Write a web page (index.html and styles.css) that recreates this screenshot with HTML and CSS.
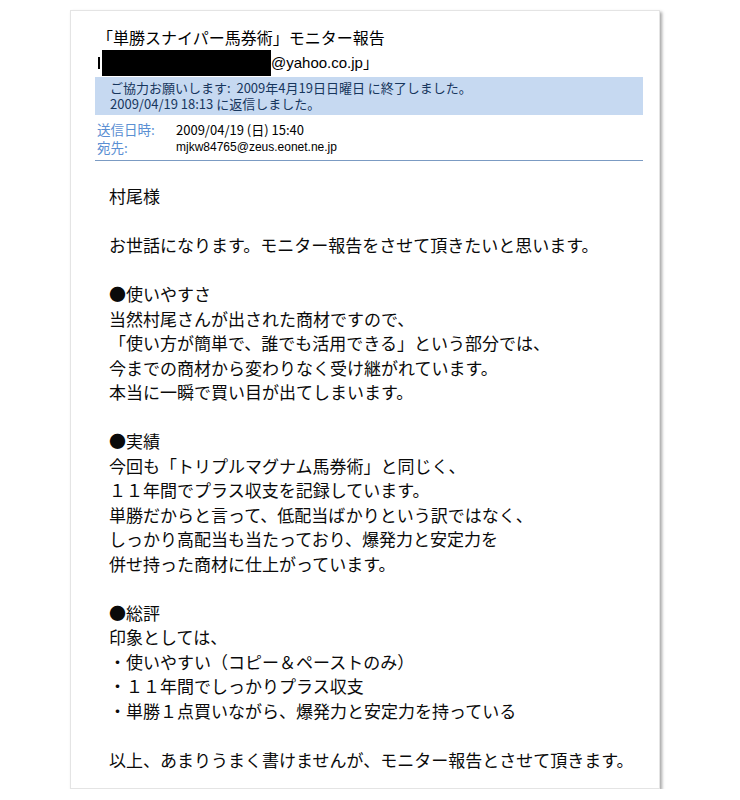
FILE: index.html
```html
<!DOCTYPE html>
<html lang="ja">
<head>
<meta charset="utf-8">
<title>モニター報告</title>
<link rel="stylesheet" href="styles.css">
</head>
<body>
<div class="card">
  <div class="head">
    <div class="subject">「単勝スナイパー馬券術」モニター報告</div>
    <div class="from"><span class="tick"></span><span class="redact"></span><span class="addr">@yahoo.co.jp」</span></div>
    <div class="notice">
      <div>ご協力お願いします:&nbsp; 2009年4月19日日曜日 に終了しました。</div>
      <div>2009/04/19 18:13 に返信しました。</div>
    </div>
    <div class="meta">
      <div class="row"><span class="label">送信日時:</span><span class="value">2009/04/19 (日) 15:40</span></div>
      <div class="row"><span class="label">宛先:</span><span class="value small">mjkw84765@zeus.eonet.ne.jp</span></div>
    </div>
  </div>
  <div class="body">
    <p>村尾様</p>
    <p>お世話になります。モニター報告をさせて頂きたいと思います。</p>
    <p>●使いやすさ<br>当然村尾さんが出された商材ですので、<br>「使い方が簡単で、誰でも活用できる」という部分では、<br>今までの商材から変わりなく受け継がれています。<br>本当に一瞬で買い目が出てしまいます。</p>
    <p>●実績<br>今回も「トリプルマグナム馬券術」と同じく、<br>１１年間でプラス収支を記録しています。<br>単勝だからと言って、低配当ばかりという訳ではなく、<br>しっかり高配当も当たっており、爆発力と安定力を<br>併せ持った商材に仕上がっています。</p>
    <p>●総評<br>印象としては、<br>・使いやすい（コピー＆ペーストのみ）<br>・１１年間でしっかりプラス収支<br>・単勝１点買いながら、爆発力と安定力を持っている</p>
    <p>以上、あまりうまく書けませんが、モニター報告とさせて頂きます。</p>
  </div>
</div>
</body>
</html>
```
FILE: styles.css
```css
html, body {
  margin: 0;
  padding: 0;
  background: #ffffff;
}
body {
  font-family: "Noto Sans CJK JP", "Liberation Sans", sans-serif;
  color: #000;
}
.card {
  box-sizing: border-box;
  margin: 10px 0 0 70px;
  width: 590px;
  height: 779px;
  background: #fff;
  border: 1px solid #e4e4e4;
  box-shadow: 2px 2px 3px rgba(0, 0, 0, 0.35);
}
.head {
  padding: 16px 16px 0 24px;
}
.subject {
  font-size: 16px;
  line-height: 20px;
  padding-left: 2px;
  white-space: nowrap;
}
.from {
  display: flex;
  align-items: center;
  height: 26px;
  margin-top: 3px;
  padding-left: 3px;
}
.tick {
  width: 2px;
  height: 12px;
  background: #000;
  margin-right: 2px;
}
.redact {
  width: 169px;
  height: 26px;
  background: #000;
}
.addr {
  font-family: "Liberation Sans", "Noto Sans CJK JP", sans-serif;
  font-size: 15px;
  line-height: 20px;
}
.notice {
  margin-top: 1px;
  background: #c6d9f1;
  color: #17365d;
  font-size: 13px;
  line-height: 16px;
  padding: 3px 15px;
  white-space: nowrap;
}
.meta {
  margin-top: 5px;
  padding-bottom: 4px;
  border-bottom: 1px solid #7b9bc3;
}
.row {
  display: flex;
  align-items: center;
  height: 18px;
}
.label {
  width: 79px;
  padding-left: 2px;
  font-size: 13.5px;
  color: #5b8fd3;
}
.value {
  font-size: 13px;
  color: #000;
}
.value.small {
  font-family: "Liberation Sans", "Noto Sans CJK JP", sans-serif;
  font-size: 12px;
}
.body {
  padding: 23px 0 0 38px;
  font-size: 17px;
  line-height: 24.5px;
  white-space: nowrap;
  color: #0a0a0a;
}
.body p {
  margin: 0 0 24.5px 0;
}
```
